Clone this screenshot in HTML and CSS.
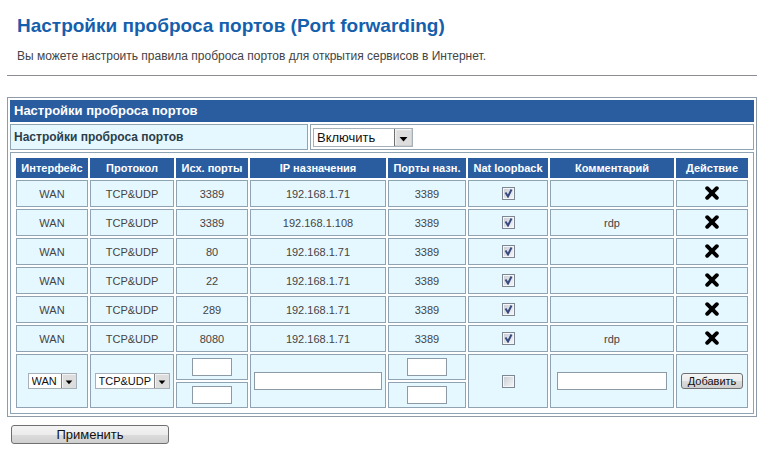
FILE: index.html
```
<!DOCTYPE html>
<html lang="ru">
<head>
    <meta charset="UTF-8">
    <meta name="viewport" content="width=device-width, initial-scale=1.0">
    <title>Настройки проброса портов</title>
    <link rel="stylesheet" href="styles.css">
</head>
<body>
    <svg class="sprite" aria-hidden="true">
        <symbol id="cross" viewBox="0 0 14 14">
            <path d="M2.2 2.2 L11.8 11.8 M11.8 2.2 L2.2 11.8" fill="none" stroke="#000" stroke-width="3.9" stroke-linecap="round"/>
        </symbol>
    </svg>

    <div class="intro">
        <h1>Настройки проброса портов (Port forwarding)</h1>
        <p>Вы можете настроить правила проброса портов для открытия сервисов в Интернет.</p>
    </div>
    <hr>

    <form>
        <table class="form">
            <colgroup>
                <col class="col-label">
                <col>
            </colgroup>
            <tr><th class="title" colspan="2">Настройки проброса портов</th></tr>
            <tr>
                <td class="label"><label for="enabled">Настройки проброса портов</label></td>
                <td class="value">
                    <select id="enabled" class="select-main">
                        <option>Включить</option>
                        <option>Выключить</option>
                    </select>
                </td>
            </tr>
            <tr>
                <td class="holder" colspan="2">
                    <table class="rules">
                        <colgroup>
                            <col class="col-iface">
                            <col class="col-proto">
                            <col class="col-src">
                            <col class="col-ip">
                            <col class="col-dst">
                            <col class="col-nat">
                            <col class="col-comment">
                            <col class="col-action">
                        </colgroup>
                        <thead>
                            <tr>
                                <th>Интерфейс</th>
                                <th>Протокол</th>
                                <th>Исх. порты</th>
                                <th>IP назначения</th>
                                <th>Порты назн.</th>
                                <th>Nat loopback</th>
                                <th>Комментарий</th>
                                <th>Действие</th>
                            </tr>
                        </thead>
                        <tbody>
                            <tr>
                                <td>WAN</td><td>TCP&amp;UDP</td><td>3389</td><td>192.168.1.71</td><td>3389</td>
                                <td><input type="checkbox" aria-label="Nat loopback" checked></td>
                                <td></td>
                                <td><button type="button" class="delete" aria-label="Удалить"><svg><use href="#cross"/></svg></button></td>
                            </tr>
                            <tr>
                                <td>WAN</td><td>TCP&amp;UDP</td><td>3389</td><td>192.168.1.108</td><td>3389</td>
                                <td><input type="checkbox" aria-label="Nat loopback" checked></td>
                                <td>rdp</td>
                                <td><button type="button" class="delete" aria-label="Удалить"><svg><use href="#cross"/></svg></button></td>
                            </tr>
                            <tr>
                                <td>WAN</td><td>TCP&amp;UDP</td><td>80</td><td>192.168.1.71</td><td>3389</td>
                                <td><input type="checkbox" aria-label="Nat loopback" checked></td>
                                <td></td>
                                <td><button type="button" class="delete" aria-label="Удалить"><svg><use href="#cross"/></svg></button></td>
                            </tr>
                            <tr>
                                <td>WAN</td><td>TCP&amp;UDP</td><td>22</td><td>192.168.1.71</td><td>3389</td>
                                <td><input type="checkbox" aria-label="Nat loopback" checked></td>
                                <td></td>
                                <td><button type="button" class="delete" aria-label="Удалить"><svg><use href="#cross"/></svg></button></td>
                            </tr>
                            <tr>
                                <td>WAN</td><td>TCP&amp;UDP</td><td>289</td><td>192.168.1.71</td><td>3389</td>
                                <td><input type="checkbox" aria-label="Nat loopback" checked></td>
                                <td></td>
                                <td><button type="button" class="delete" aria-label="Удалить"><svg><use href="#cross"/></svg></button></td>
                            </tr>
                            <tr>
                                <td>WAN</td><td>TCP&amp;UDP</td><td>8080</td><td>192.168.1.71</td><td>3389</td>
                                <td><input type="checkbox" aria-label="Nat loopback" checked></td>
                                <td>rdp</td>
                                <td><button type="button" class="delete" aria-label="Удалить"><svg><use href="#cross"/></svg></button></td>
                            </tr>
                        </tbody>
                        <!-- new rule: port ranges take two lines -->
                        <tbody class="new-rule">
                            <tr>
                                <td rowspan="2">
                                    <select class="select-iface" aria-label="Интерфейс"><option>WAN</option></select>
                                </td>
                                <td rowspan="2">
                                    <select class="select-proto" aria-label="Протокол">
                                        <option>TCP&amp;UDP</option>
                                        <option>TCP</option>
                                        <option>UDP</option>
                                    </select>
                                </td>
                                <td><input type="text" class="port" aria-label="Исх. порт, начало"></td>
                                <td rowspan="2"><input type="text" class="ip" aria-label="IP назначения"></td>
                                <td><input type="text" class="port" aria-label="Порт назн., начало"></td>
                                <td rowspan="2"><input type="checkbox" aria-label="Nat loopback"></td>
                                <td rowspan="2"><input type="text" class="comment" aria-label="Комментарий"></td>
                                <td rowspan="2"><button type="button" class="btn add">Добавить</button></td>
                            </tr>
                            <tr>
                                <td><input type="text" class="port" aria-label="Исх. порт, конец"></td>
                                <td><input type="text" class="port" aria-label="Порт назн., конец"></td>
                            </tr>
                        </tbody>
                    </table>
                </td>
            </tr>
        </table>
        <button type="submit" class="btn apply">Применить</button>
    </form>
</body>
</html>
```
FILE: styles.css
```
* {
    box-sizing: border-box;
}
body {
    margin: 0;
    padding: 14px 16px 12px 7px;
    font-family: "Liberation Sans", Arial, sans-serif;
    font-size: 12px;
    background: #fff;
    color: #444;
}
.sprite {
    display: none;
}
.intro {
    padding: 0 10px;
}
h1 {
    margin: 0;
    font-size: 19px;
    line-height: 24px;
    color: #1560ad;
}
p {
    margin: 11px 0;
    line-height: 15px;
}
hr {
    margin: 0 0 21px;
    border: none;
    border-top: 1px solid #8c8c94;
}

table {
    width: 100%;
    table-layout: fixed;
    border-collapse: separate;
    border-spacing: 2px;
}
td, th {
    border: 1px solid #8fa3b3;
}

/* outer table */
.form {
    border: 1px solid #8f9ba8;
}
.col-label {
    width: 298px;
}
.title {
    height: 22px;
    padding: 0 3px;
    border-color: #2a5ca0;
    background: #2a5ca0;
    color: #fff;
    font-size: 13px;
    line-height: 20px;
    text-align: left;
}
.label {
    height: 26px;
    padding: 0 3px;
    background: #e6f8ff;
    color: #2c3e4a;
    font-weight: bold;
}
.value {
    padding: 0 2px;
}
.holder {
    padding: 3px;
}

/* rules */
.rules {
    font-size: 11px;
    text-align: center;
}
.col-iface, .col-src, .col-action { width: 72px; }
.col-proto { width: 84px; }
.col-ip { width: 136px; }
.col-dst { width: 78px; }
.col-nat { width: 80px; }
.col-comment { width: 124px; }

.rules th {
    height: 20px;
    padding: 0;
    border-color: #2a5ca0;
    background: #2a5ca0;
    color: #fff;
    white-space: nowrap;
}
.rules td {
    height: 27px;
    padding: 0 3px;
    background: #e6f8ff;
}
.rules .new-rule td {
    height: 26px;
}

/* controls */
input, select, button {
    display: block;
    margin: 0 auto;
    font-family: inherit;
    font-size: 11px;
    color: #111;
}
input[type="text"] {
    height: 18px;
    padding: 0 3px;
    border: 1px solid #8c9aa6;
    background: #fff;
}
.rules .port {
    width: 40px;
}
.rules .ip {
    width: 100%;
}
.rules .comment {
    width: 110px;
    max-width: 100%;
}
input[type="checkbox"] {
    appearance: none;
    width: 13px;
    height: 13px;
    border: 1px solid #7d8894;
    background: linear-gradient(135deg, #c6cbd2, #f8f8f8);
    box-shadow: inset 0 0 0 1px #f4f6f8;
}
input[type="checkbox"]:checked {
    background: url("data:image/svg+xml,%3Csvg xmlns='http://www.w3.org/2000/svg' viewBox='0 0 11 11'%3E%3Cpath d='M2.5 4.5 L5 8.5 L8.5 1.5' fill='none' stroke='%23394a80' stroke-width='2'/%3E%3C/svg%3E") center / 11px 11px no-repeat,
                linear-gradient(135deg, #c6cbd2, #f8f8f8);
}
select {
    appearance: none;
    height: 16px;
    padding: 0 17px 0 3px;
    border: 1px solid #a5b0b8;
    border-radius: 0;
    background: #fff url("data:image/svg+xml,%3Csvg xmlns='http://www.w3.org/2000/svg' viewBox='0 0 17 17'%3E%3Crect x='.5' y='.5' width='16' height='16' fill='%23ddd' stroke='%23707070'/%3E%3Cpath d='M1.5 15.5 V1.5 H15.5' fill='none' stroke='%23f6f6f6'/%3E%3Cpath d='M5 8 H12 L8.5 12 Z'/%3E%3C/svg%3E") right center / auto 100% no-repeat;
    background-origin: border-box;
}
.select-main {
    width: 100px;
    height: 19px;
    margin: 0;
    font-size: 13px;
}
.select-iface {
    width: 49px;
}
.select-proto {
    width: 75px;
}
.btn {
    padding: 0;
    border: 1px solid #707070;
    border-radius: 3px;
    background: linear-gradient(#f4f4f4, #ececec 50%, #dddddd 50%, #cfcfcf);
    cursor: pointer;
}
.add {
    width: 62px;
    height: 16px;
    line-height: 14px;
}
.apply {
    width: 158px;
    height: 19px;
    margin: 8px 4px 0;
    font-size: 13px;
    line-height: 17px;
}
.delete {
    padding: 0 0 2px;
    border: none;
    background: none;
    cursor: pointer;
}
.delete svg {
    display: block;
    width: 14px;
    height: 14px;
}
```
